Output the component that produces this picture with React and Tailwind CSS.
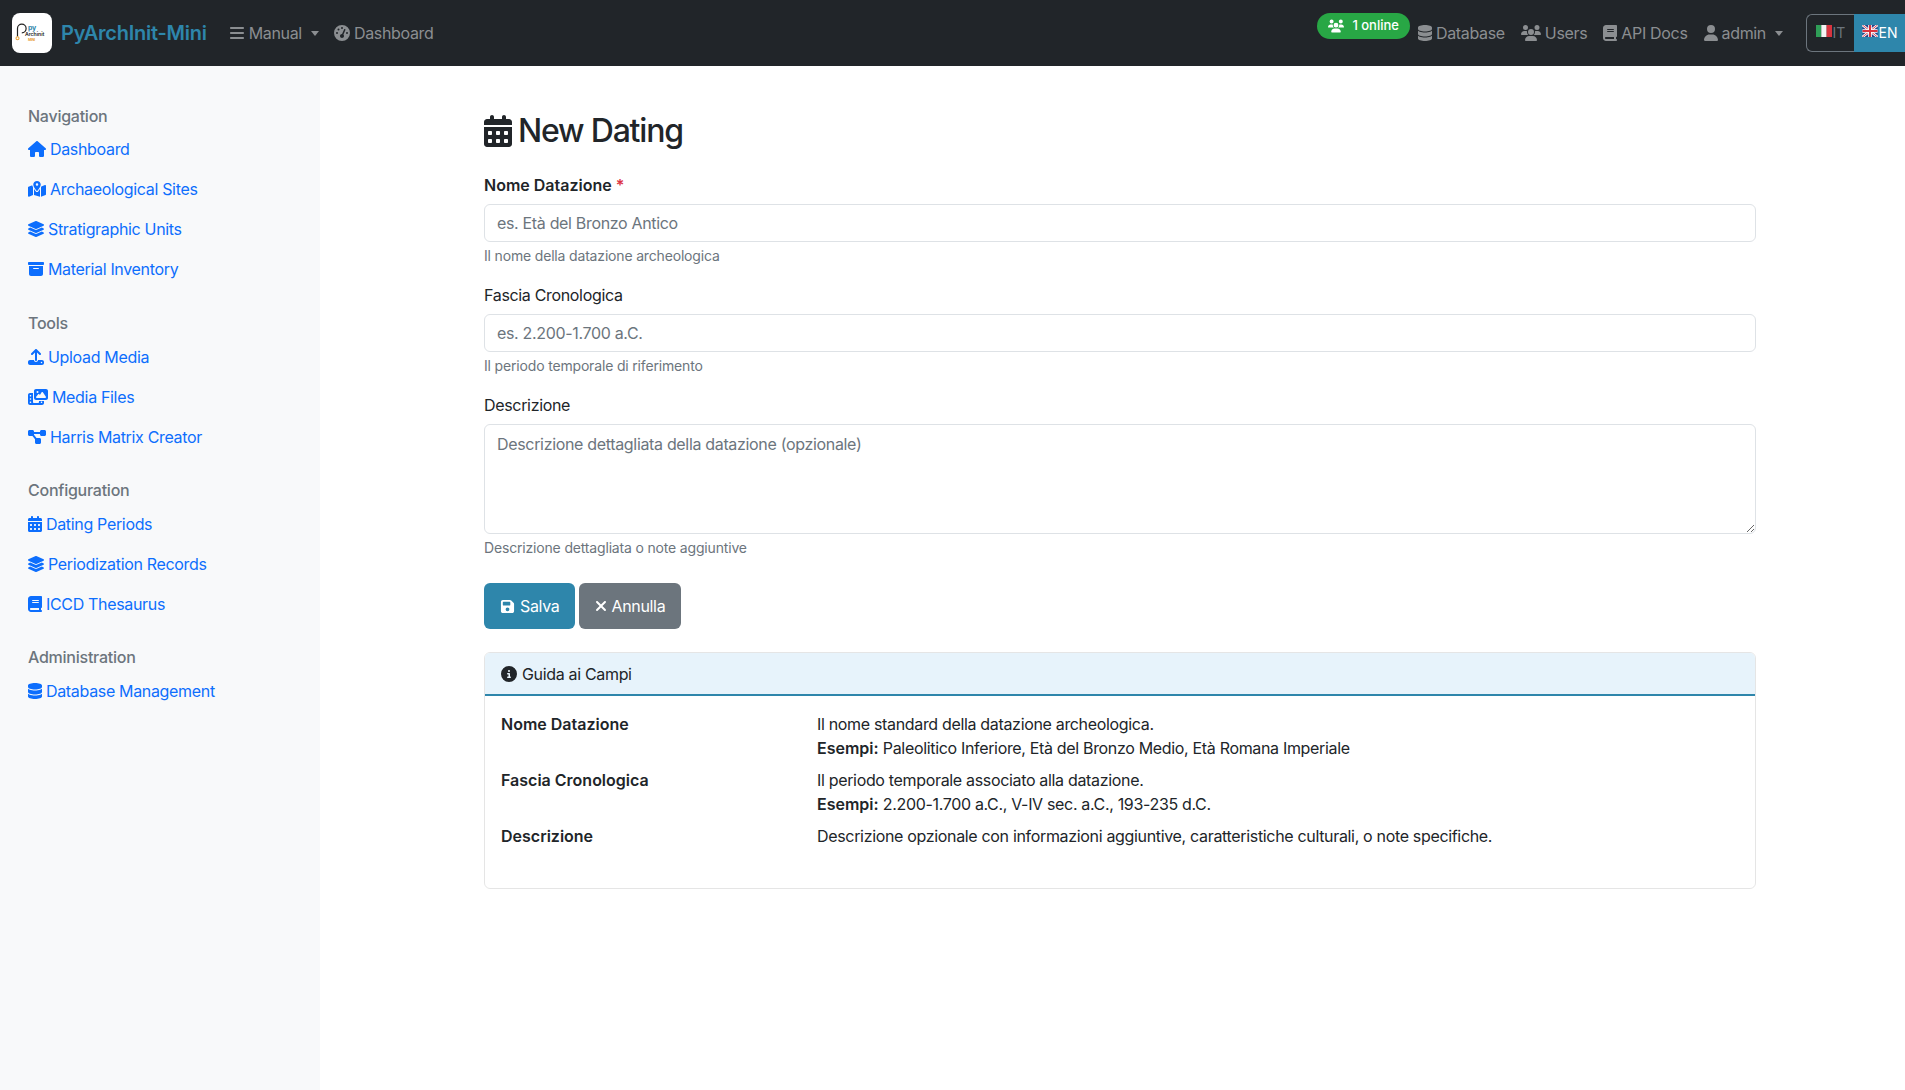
import {
  FaBars, FaGaugeHigh, FaUsers, FaDatabase, FaBook, FaUser, FaHouse, FaMapLocationDot,
  FaBoxArchive, FaUpload, FaPhotoFilm, FaDiagramProject, FaCalendarDays, FaFloppyDisk, FaXmark, FaCircleInfo,
} from "react-icons/fa6"
import { FaLayerGroup } from "react-icons/fa"

const sections = [
  {
    title: "Navigation",
    gap: "mb-px",
    end: "mb-[22px]",
    links: [
      { label: "Dashboard", icon: FaHouse, size: "w-[18px]" },
      { label: "Archaeological Sites", icon: FaMapLocationDot, size: "w-[18px]" },
      { label: "Stratigraphic Units", icon: FaLayerGroup, size: "w-4" },
      { label: "Material Inventory", icon: FaBoxArchive, size: "w-4" },
    ],
  },
  {
    title: "Tools",
    gap: "mb-0.5",
    end: "mb-[21px]",
    links: [
      { label: "Upload Media", icon: FaUpload, size: "w-4" },
      { label: "Media Files", icon: FaPhotoFilm, size: "w-5" },
      { label: "Harris Matrix Creator", icon: FaDiagramProject, size: "w-[18px]" },
    ],
  },
  {
    title: "Configuration",
    gap: "mb-0.5",
    end: "mb-[21px]",
    links: [
      { label: "Dating Periods", icon: FaCalendarDays, size: "w-[14px]" },
      { label: "Periodization Records", icon: FaLayerGroup, size: "w-4" },
      { label: "ICCD Thesaurus", icon: FaBook, size: "w-[14px]" },
    ],
  },
  {
    title: "Administration",
    gap: "mb-0.5",
    end: "mb-[21px]",
    links: [{ label: "Database Management", icon: FaDatabase, size: "w-[14px]" }],
  },
]

const guide = [
  {
    name: "Nome Datazione",
    text: "Il nome standard della datazione archeologica.",
    examples: "Paleolitico Inferiore, Età del Bronzo Medio, Età Romana Imperiale",
  },
  {
    name: "Fascia Cronologica",
    text: "Il periodo temporale associato alla datazione.",
    examples: "2.200-1.700 a.C., V-IV sec. a.C., 193-235 d.C.",
  },
  {
    name: "Descrizione",
    text: "Descrizione opzionale con informazioni aggiuntive, caratteristiche culturali, o note specifiche.",
  },
]

function Logo() {
  return (
    <div className="w-10 h-10 rounded-lg bg-white shrink-0">
      <svg viewBox="0 0 40 40" className="w-10 h-10">
        <path d="M5.5 23.5V15.5a4.3 4.3 0 1 1 4.3 4.3" fill="none" stroke="#222" strokeWidth="1.2" />
        <circle cx="5.5" cy="25.3" r="1.5" fill="none" stroke="#e8a33a" strokeWidth="1.1" />
        <text x="16" y="17" fontSize="7" fontWeight="700" fill="#2e86ab" fontFamily="Inter, sans-serif">py</text>
        <text x="13" y="22.5" fontSize="5.2" fontWeight="600" fill="#222" fontFamily="Inter, sans-serif" letterSpacing="-0.05">Archinit</text>
        <text x="16" y="27.5" fontSize="3.6" fontWeight="700" fill="#e8a33a" fontFamily="Inter, sans-serif">MINI</text>
      </svg>
    </div>
  )
}

function Caret() {
  return <span className="ml-[5px] w-0 h-0 border-x-[4.5px] border-x-transparent border-t-[5px] border-t-current" />
}

function NavItem({ icon: Icon, label, caret, iconClass = "w-4" }) {
  return (
    <a className="flex items-center gap-1 text-[#8b8e91]">
      <Icon className={`${iconClass} h-4`} />
      <span>{label}</span>
      {caret && <Caret />}
    </a>
  )
}

function FlagIT() {
  return (
    <svg viewBox="0 0 16 12" className="w-4 h-3 -mt-1 mr-px shrink-0">
      <rect width="5.4" height="12" fill="#2f9e57" />
      <rect x="5.3" width="5.4" height="12" fill="#f4f4f4" />
      <rect x="10.6" width="5.4" height="12" fill="#d8343f" />
    </svg>
  )
}

function FlagEN() {
  return (
    <svg viewBox="0 0 15 12" className="w-4 h-3 -mt-1 mr-px shrink-0">
      <rect width="15" height="12" fill="#2b3f86" />
      <path d="M0 0L15 12M15 0L0 12" stroke="#fff" strokeWidth="2.4" />
      <path d="M0 0L15 12M15 0L0 12" stroke="#d8343f" strokeWidth="0.9" />
      <path d="M7.5 0V12M0 6H15" stroke="#fff" strokeWidth="3.6" />
      <path d="M7.5 0V12M0 6H15" stroke="#d8343f" strokeWidth="2" />
    </svg>
  )
}

function Navbar() {
  return (
    <nav className="h-[66px] bg-[#212529] flex items-center pl-3 shrink-0">
      <Logo />
      <span className="ml-[9px] text-[20px] font-semibold tracking-[-0.25px] text-[#2e86ab]">PyArchInit-Mini</span>
      <div className="ml-[22px] flex items-center gap-[15px]">
        <NavItem icon={FaBars} label="Manual" caret />
        <NavItem icon={FaGaugeHigh} label="Dashboard" />
      </div>
      <div className="ml-auto flex items-center">
        <span className="-mt-[14px] h-[26px] mr-2 pl-[11px] pr-[11px] rounded-full bg-[#28a745] text-white text-[13px] font-medium tracking-normal flex items-center gap-2">
          <FaUsers className="w-4 h-4" />1 online
        </span>
        <div className="flex items-center gap-4">
          <NavItem icon={FaDatabase} label="Database" iconClass="w-3.5" />
          <NavItem icon={FaUsers} label="Users" iconClass="w-5" />
          <NavItem icon={FaBook} label="API Docs" iconClass="w-3.5" />
          <NavItem icon={FaUser} label="admin" iconClass="w-3.5" caret />
        </div>
        <div className="ml-[23px] flex h-[38px] -mt-px">
          <a className="w-[48px] flex items-center justify-center border border-r-0 border-[#6c757d] rounded-l-md text-[#6c757d] text-sm tracking-normal">
            <FlagIT />IT
          </a>
          <a className="w-[51px] flex items-center justify-center bg-[#2e86ab] text-white text-sm tracking-normal">
            <FlagEN />EN
          </a>
        </div>
      </div>
    </nav>
  )
}

function Sidebar() {
  return (
    <aside className="w-[320px] shrink-0 bg-[#f8f9fa] pt-[38px] pl-7">
      {sections.map((section) => (
        <div key={section.title} className={section.end}>
          <h6 className={`h-6 leading-6 text-[#6c757d] font-medium tracking-[-0.25px] ${section.gap}`}>{section.title}</h6>
          {section.links.map((link) => (
            <a key={link.label} className="h-10 flex items-center gap-1 text-[#0d6efd]">
              <link.icon className={`${link.size} h-4`} />
              <span>{link.label}</span>
            </a>
          ))}
        </div>
      ))}
    </aside>
  )
}

function Field({ label, required, bold, placeholder, help, area }) {
  const boxClass =
    "block w-full border border-[#dee2e6] rounded-md px-3 text-base bg-white placeholder:text-[#6c757d] outline-none"
  return (
    <div className="mb-[17px]">
      <label className={`block mb-[7px] leading-6 ${bold ? "font-semibold tracking-normal" : ""}`}>
        {label}
        {required && <span className="text-[#dc3545]"> *</span>}
      </label>
      {area ? (
        <textarea placeholder={placeholder} className={`${boxClass} h-[110px] py-[7px] resize-y`} />
      ) : (
        <input placeholder={placeholder} className={`${boxClass} h-[38px]`} />
      )}
      <div className="mt-[3px] text-[14px] leading-[21px] tracking-[-0.17px] text-[#6c757d]">{help}</div>
    </div>
  )
}

function GuideCard() {
  return (
    <div className="mt-[23px] h-[237px] border border-black/10 rounded-md overflow-hidden">
      <div className="h-[43px] bg-[#e7f3fb] border-b-2 border-[#2e86ab] flex items-center gap-[5px] px-4">
        <FaCircleInfo className="w-4 h-4" />
        <span>Guida ai Campi</span>
      </div>
      <div className="p-4">
        {guide.map((row) => (
          <div key={row.name} className="flex mb-2">
            <div className="w-[316px] shrink-0 font-semibold tracking-normal">{row.name}</div>
            <div>
              <div>{row.text}</div>
              {row.examples && (
                <div>
                  <strong className="font-semibold tracking-normal">Esempi:</strong> {row.examples}
                </div>
              )}
            </div>
          </div>
        ))}
      </div>
    </div>
  )
}

export default function App() {
  return (
    <div className="min-h-screen flex flex-col bg-white text-[#212529] text-base tracking-[-0.33px] font-['Inter',sans-serif]">
      <Navbar />
      <div className="flex flex-1">
        <Sidebar />
        <main className="flex-1 pl-[164px] pr-[149px] pt-[46px]">
          <h1 className="h-[38px] flex items-center gap-1.5 text-[32px] font-medium tracking-[-1.2px] mb-[23px]">
            <FaCalendarDays className="w-7 h-8 -mt-px" />
            New Dating
          </h1>
          <Field label="Nome Datazione" required bold placeholder="es. Età del Bronzo Antico" help="Il nome della datazione archeologica" />
          <Field label="Fascia Cronologica" placeholder="es. 2.200-1.700 a.C." help="Il periodo temporale di riferimento" />
          <Field area label="Descrizione" placeholder="Descrizione dettagliata della datazione (opzionale)" help="Descrizione dettagliata o note aggiuntive" />
          <div className="flex gap-1 mt-[25px]">
            <button className="h-[46px] px-4 rounded-md bg-[#2e86ab] text-white flex items-center gap-[5px]">
              <FaFloppyDisk className="w-[15px] h-[15px]" />Salva
            </button>
            <button className="h-[46px] px-4 rounded-md bg-[#6c757d] text-white flex items-center gap-1">
              <FaXmark className="w-3 h-4" />Annulla
            </button>
          </div>
          <GuideCard />
        </main>
      </div>
    </div>
  )
}
